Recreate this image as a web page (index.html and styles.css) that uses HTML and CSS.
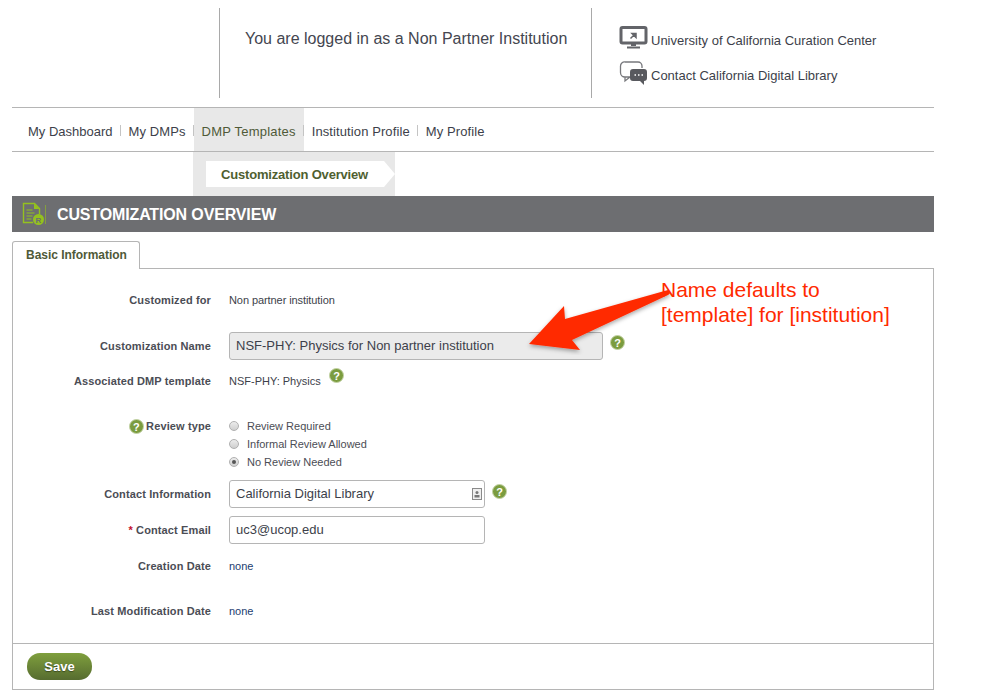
FILE: index.html
```html
<!DOCTYPE html>
<html lang="en">
<head>
<meta charset="utf-8">
<title>Customization Overview</title>
<link rel="stylesheet" href="styles.css">
</head>
<body>
<div class="page">
  <header class="top">
    <div class="top-blank"></div>
    <div class="top-login">You are logged in as a Non Partner Institution</div>
    <div class="top-links">
      <div class="top-link">
        <svg class="top-icon" width="30" height="24" viewBox="0 0 30 24"><rect x="2" y="1.500" width="25" height="15.500" rx="1.500" fill="none" stroke="#636469" stroke-width="3"/><path d="M12 17h5v3h-5z" fill="#636469"/><path d="M8 20.500h13v2H8z" fill="#636469"/><path d="M11.500 12.500l4-4M13 7.500h4v4z" stroke="#636469" stroke-width="1.500" fill="#636469"/></svg>
        <span class="top-text">University of California Curation Center</span>
      </div>
      <div class="top-link">
        <svg class="top-icon" width="30" height="24" viewBox="0 0 30 24"><path d="M6 1h13a4 4 0 0 1 4 4v2M11 16H6a4.500 4.500 0 0 1-4.500-4.500V5A4 4 0 0 1 6 1M6 16v4l5-4" fill="none" stroke="#77787c" stroke-width="1.300"/><path d="M14 8h11a3 3 0 0 1 3 3v6a3 3 0 0 1-3 3v4l-4-4h-7a3 3 0 0 1-3-3v-6a3 3 0 0 1 3-3z" fill="#58595e"/><path d="M15.500 14h1.500M19 14h1.500M22.500 14H24" stroke="#fff" stroke-width="1.300"/></svg>
        <span class="top-text">Contact California Digital Library</span>
      </div>
    </div>
  </header>

  <nav class="nav">
    <a class="nav-item">My Dashboard</a>
    <a class="nav-item">My DMPs</a>
    <a class="nav-item nav-active">DMP Templates</a>
    <a class="nav-item">Institution Profile</a>
    <a class="nav-item nav-last">My Profile</a>
  </nav>

  <div class="subnav">
    <div class="subnav-bg">
      <div class="subnav-tab">Customization Overview</div>
    </div>
  </div>

  <div class="titlebar">
    <svg class="title-icon" width="24" height="24" viewBox="0 0 24 24"><path d="M11 20.500H1.500v-19h11l5 5v6" fill="none" stroke="#94c11f" stroke-width="1.400"/><path d="M12 1.500v5.500h5.500z" fill="#94c11f"/><path d="M4.500 8h6M4.500 11h8M4.500 14h6M4.500 17h5" stroke="#94c11f" stroke-width="1.200"/><circle cx="16.500" cy="17.500" r="5.500" fill="#94c11f"/><text class="title-icon-r" x="16.500" y="20.500" text-anchor="middle">R</text><path d="M23.500 3v19" stroke="#94c11f" stroke-width=".6"/></svg>
    <h1 class="title">CUSTOMIZATION OVERVIEW</h1>
  </div>

  <div class="tabs">
    <div class="tab">Basic Information</div>
  </div>

  <section class="panel">
    <div class="form">
      <div class="row row-name">
        <div class="label">Customized for</div>
        <div class="value value-tight">Non partner institution</div>
      </div>
      <div class="row row-cname">
        <div class="label">Customization Name</div>
        <div class="value value-field">
          <div class="field field-disabled">NSF-PHY: Physics for Non partner institution</div>
          <svg class="help help-cname" width="15" height="15" viewBox="0 0 15 15"><circle cx="7.500" cy="7.500" r="7" fill="#7b9c3f" stroke="#c3d2a5"/><text class="help-q" x="7.500" y="11.500" text-anchor="middle">?</text></svg>
        </div>
      </div>
      <div class="row row-template">
        <div class="label">Associated DMP template</div>
        <div class="value value-field">
          <span>NSF-PHY: Physics</span>
          <svg class="help help-template" width="15" height="15" viewBox="0 0 15 15"><circle cx="7.500" cy="7.500" r="7" fill="#7b9c3f" stroke="#c3d2a5"/><text class="help-q" x="7.500" y="11.500" text-anchor="middle">?</text></svg>
        </div>
      </div>
      <div class="row row-review">
        <div class="label label-help">
          <svg class="help" width="15" height="15" viewBox="0 0 15 15"><circle cx="7.500" cy="7.500" r="7" fill="#7b9c3f" stroke="#c3d2a5"/><text class="help-q" x="7.500" y="11.500" text-anchor="middle">?</text></svg>
          <span>Review type</span>
        </div>
        <div class="radios">
          <div class="radio-line"><span class="radio"></span>Review Required</div>
          <div class="radio-line"><span class="radio"></span>Informal Review Allowed</div>
          <div class="radio-line"><span class="radio radio-on"></span>No Review Needed</div>
        </div>
      </div>
      <div class="row row-contact">
        <div class="label">Contact Information</div>
        <div class="value value-field">
          <div class="field field-small">California Digital Library
            <svg class="card-icon" width="10" height="12" viewBox="0 0 10 12"><rect x=".5" y=".5" width="9" height="11" fill="#efefef" stroke="#8a8a8a"/><circle cx="5" cy="4.500" r="1.500" fill="#777"/><path d="M2.500 7h5v2.500h-5z" fill="#777"/></svg>
          </div>
          <svg class="help help-contact" width="15" height="15" viewBox="0 0 15 15"><circle cx="7.500" cy="7.500" r="7" fill="#7b9c3f" stroke="#c3d2a5"/><text class="help-q" x="7.500" y="11.500" text-anchor="middle">?</text></svg>
        </div>
      </div>
      <div class="row row-email">
        <div class="label"><span class="req">*</span> Contact Email</div>
        <div class="value value-field">
          <div class="field field-small">uc3@ucop.edu</div>
        </div>
      </div>
      <div class="row row-created">
        <div class="label">Creation Date</div>
        <div class="value value-link">none</div>
      </div>
      <div class="row row-modified">
        <div class="label">Last Modification Date</div>
        <div class="value value-link">none</div>
      </div>
    </div>
    <div class="actions">
      <button class="save" type="button">Save</button>
    </div>
  </section>

  <svg class="arrow" width="180" height="80" viewBox="0 0 180 80"><defs><filter id="arrow-shadow" x="-10%" y="-20%" width="120%" height="150%"><feDropShadow dx="0" dy="2" stdDeviation="2" flood-color="#000" flood-opacity=".35"/></filter></defs><path d="M172 15Q176 18 172 20L76 65L84 75L33 69L68 31L69 44Z" fill="#ff2a00" filter="url(#arrow-shadow)"/></svg>
  <div class="note">Name defaults to<br>[template] for [institution]</div>
</div>
</body>
</html>
```

FILE: styles.css
```css
* { box-sizing: border-box; }
html, body { margin: 0; padding: 0; background: #fff; }
body { font-family: "Liberation Sans", Arial, sans-serif; color: #3d3f4a; height: 699px; overflow: hidden; }
.page { position: relative; width: 922px; margin-left: 12px; height: 699px; }

.top { display: flex; height: 108px; padding-top: 8px; border-bottom: 1px solid #b5b5b5; align-items: flex-start; }
.top-blank { width: 208px; height: 90px; border-right: 1px solid #a9a9a9; }
.top-login { width: 372px; height: 90px; padding: 21px 0 0 25px; font-size: 16px; line-height: 20px; color: #444650; border-right: 1px solid #a9a9a9; white-space: nowrap; }
.top-links { padding: 18px 0 0 27px; font-size: 13px; color: #3d3f4a; }
.top-link { display: flex; align-items: center; height: 24px; margin-bottom: 11px; gap: 2px; }
.top-icon { flex: none; }
.top-text { padding-top: 4px; }

.nav { display: flex; height: 44px; border-bottom: 1px solid #b5b5b5; padding-left: 8px; font-size: 13px; align-items: flex-start; }
.nav-item { position: relative; padding: 0 8px; line-height: 47px; height: 43px; color: #3d3f4a; letter-spacing: .1px; white-space: nowrap; }
.nav-item:first-child { letter-spacing: 0; }
.nav-item::after { content: ""; position: absolute; right: 0; top: 17px; height: 11px; width: 1px; background: #c4c4c4; }
.nav-active { background: #e8e8e8; color: #4f5a38; letter-spacing: .22px; }
.nav-last::after { display: none; }

.subnav { height: 44px; padding-left: 181px; }
.subnav-bg { width: 202px; height: 44px; background: #e8e8e8; padding: 9px 0 0 13px; }
.subnav-tab { width: 189px; height: 26px; background: #fff; font-size: 13px; font-weight: bold; line-height: 28px; padding-left: 15px; color: #4f5f30; letter-spacing: -.18px; white-space: nowrap; clip-path: polygon(0 0, 178px 0, 100% 13px, 178px 100%, 0 100%); }

.titlebar { display: flex; align-items: center; height: 36px; background: #6d6e71; padding-left: 10px; }
.title-icon { flex: none; }
.title-icon-r { font: bold 8px "Liberation Sans", sans-serif; fill: #6d6e71; }
.title { margin: 2px 0 0 11px; font-size: 16px; line-height: 18px; font-weight: bold; color: #fff; letter-spacing: -.14px; }

.tabs { display: flex; padding-top: 9px; height: 37px; }
.tab { width: 128px; height: 28px; position: relative; z-index: 1; background: #fff; border: 1px solid #b5b5b5; border-bottom: 0; border-radius: 3px 3px 0 0; font-size: 12px; font-weight: bold; line-height: 26px; padding-left: 13px; color: #4f5a38; letter-spacing: -.03px; }

.panel { height: 422px; border: 1px solid #b5b5b5; display: flex; flex-direction: column; margin-top: -1px; }
.form { height: 374px; padding-top: 22px; }
.row { display: grid; grid-template-columns: 198px 1fr; column-gap: 18px; font-size: 11px; }
.label { text-align: right; font-weight: bold; color: #4b4d55; line-height: 18px; letter-spacing: .12px; }
.label-help { display: flex; justify-content: flex-end; align-items: center; gap: 2px; height: 18px; }
.value { color: #3d3f4a; line-height: 18px; }
.value-tight { letter-spacing: -.08px; }
.value-field { display: flex; align-items: center; gap: 7px; }
.value-link { color: #23406f; }
.req { color: #c4122f; }

.row-name { height: 41px; }
.row-cname { height: 28px; align-items: center; }
.row-template { height: 18px; margin-top: 12px; }
.row-review { height: 54px; margin-top: 27px; }
.row-contact { height: 28px; margin-top: 9px; align-items: center; }
.row-email { height: 28px; margin-top: 8px; align-items: center; }
.row-created { height: 18px; margin-top: 13px; }
.row-modified { height: 18px; margin-top: 27px; }

.field { font-size: 13px; color: #3d3f4a; height: 28px; line-height: 26px; border: 1px solid #b5b5b5; border-radius: 3px; padding: 0 6px; background: #fff; position: relative; }
.field-disabled { width: 374px; background: #ebebeb; }
.field-small { width: 256px; }
.card-icon { position: absolute; right: 2px; top: 7px; }
.help { flex: none; }
.help-cname { position: relative; top: -4px; }
.help-template { position: relative; top: -6px; left: 1px; }
.help-contact { position: relative; top: -3px; }
.help-q { font: bold 11px "Liberation Sans", sans-serif; fill: #fff; }

.radios { display: flex; flex-direction: column; }
.radio-line { display: flex; align-items: center; height: 18px; color: #4b4d55; }
.radio { width: 10px; height: 10px; border-radius: 50%; margin-right: 8px; border: 1px solid #b0b0b0; background: linear-gradient(#ececec, #cfcfcf); flex: none; position: relative; }
.radio-on::after { content: ""; position: absolute; left: 2px; top: 2px; width: 4px; height: 4px; border-radius: 50%; background: #555; }

.actions { border-top: 1px solid #b5b5b5; flex: 1; padding: 9px 0 0 14px; }
.save { display: block; width: 65px; height: 27px; border: 0; border-radius: 13px; background: linear-gradient(#7f9f3d, #566c30); color: #fff; font: bold 13px "Liberation Sans", sans-serif; text-shadow: 0 1px 1px #3c4a20; padding: 0; }

.arrow { position: absolute; left: 484px; top: 275px; }
.note { position: absolute; left: 649px; top: 277px; font-size: 21px; line-height: 25px; color: #ff2a00; white-space: nowrap; }
```
